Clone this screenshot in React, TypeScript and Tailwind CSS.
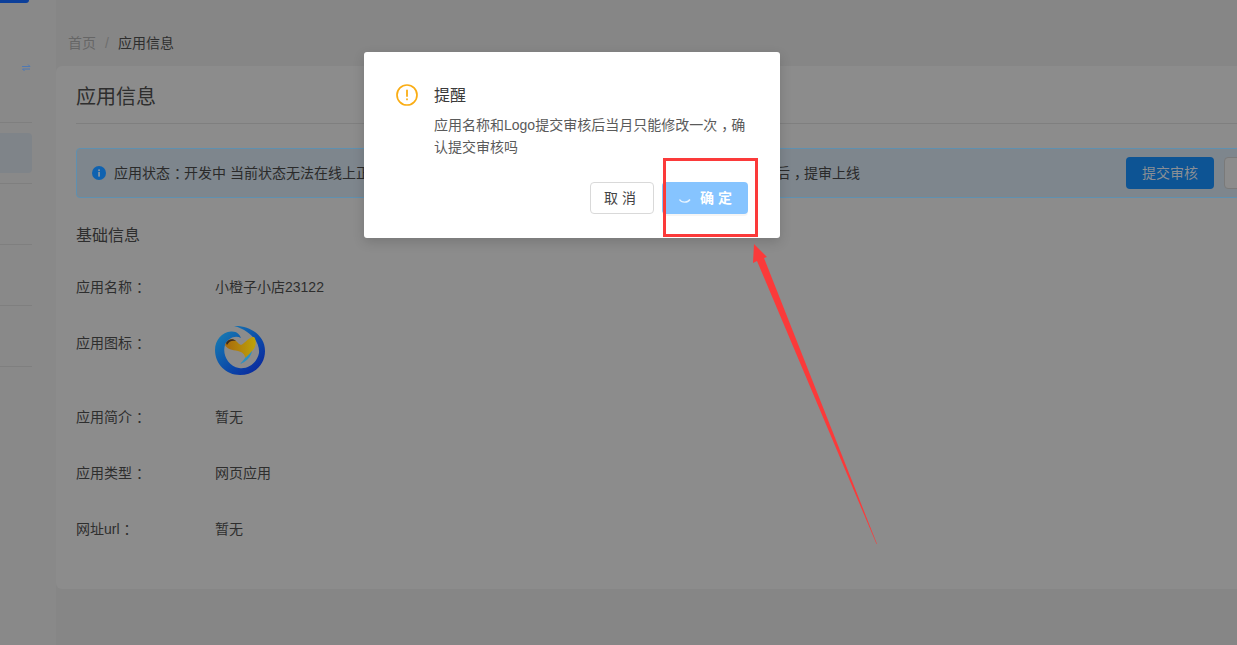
import React from "react";

function P({ c }: { c: string }) {
  return <span className="pl-[4px] tracking-[-4px]">{c}</span>;
}

function Row({ label, value, cls }: { label: React.ReactNode; value: React.ReactNode; cls: string }) {
  return (
    <div className={`flex ${cls}`}>
      <div className="w-[139px] h-7 leading-7 text-[14px] text-[#2e2e2e]">{label}</div>
      <div className="h-7 leading-7 text-[14px] text-[#2e2e2e]">{value}</div>
    </div>
  );
}

function Logo() {
  return (
    <svg width="50" height="50" viewBox="0 0 50 50" className="-mt-[4px]">
      <defs>
        <linearGradient id="ring" x1="0" y1="0" x2="1" y2="1">
          <stop offset="0" stopColor="#1a86b4" />
          <stop offset="0.6" stopColor="#0b47a8" />
          <stop offset="1" stopColor="#0a1f9a" />
        </linearGradient>
        <linearGradient id="heart" x1="0" y1="0" x2="1" y2="0">
          <stop offset="0" stopColor="#a8690c" />
          <stop offset="1" stopColor="#bda30a" />
        </linearGradient>
      </defs>
      <path d="M19 1 C34 0 50 10 50 26 C50 40 39 50 25 50 C11 50 0 39 0 25 C0 15 7 7 16 6.5 C22 6 25 10 26 13 C20 10 13 13 10 20 C7 29 13 41 24 43 C33 44.5 42 38 44 28 C45 16 34 5 19 1 Z" fill="url(#ring)" />
      <path d="M10 20 C12 14 18 13 21 16 C23 18 24 19 26 20 C30 18 35 11 39 12 C42 15 41 23 37 26 C35 29 32 32 30 33 C30 29 27 27 23 26 C17 25 12 24 10 20 Z" fill="url(#heart)" />
      <path d="M11 18 C13 14 18 13 21 16 C17 15 14 16 12 20 Z" fill="#3a2a20" />
      <path d="M37 26 C36 32 31 37 25 39 C29 35 30 33 30 33 C33 31 35 28 37 26 Z" fill="#2a8fc0" />
    </svg>
  );
}

export default function App() {
  return (
    <div className="relative w-[1237px] h-[645px] overflow-hidden bg-[#868686] font-['Liberation_Sans','Noto_Sans_CJK_SC',sans-serif]">
      <div className="flex h-[645px]">
        <aside className="w-[56px] shrink-0 h-[645px] bg-[#898989]">
          <div className="w-[29px] h-[3px] bg-[#0c3f9a] rounded-br-sm" />
          <div className="flex justify-end w-[32px] mt-[60px]">
            <svg width="10" height="10" viewBox="0 0 10 10" fill="none" stroke="#4f79b4" strokeWidth="1">
              <path d="M0 3.5H8L6 1.5" />
              <path d="M8 6H0.5L2.5 8" />
            </svg>
          </div>
          <div className="w-[32px] mt-[49px]">
            <div className="h-[61px] border-t border-[#7f7f7f] pt-[10px]">
              <div className="h-[40px] bg-[#7f8489] rounded-r-sm" />
            </div>
            <div className="h-[61px] border-t border-[#7f7f7f]" />
            <div className="h-[61px] border-t border-[#7f7f7f]" />
            <div className="h-[61px] border-t border-[#7f7f7f]" />
            <div className="h-[61px] border-t border-[#7f7f7f]" />
          </div>
        </aside>
        <main className="w-[1300px] shrink-0">
          <div className="flex items-center h-[22px] mt-[32px] ml-[12px] text-[14px]">
            <span className="text-[#666666]">首页</span>
            <span className="text-[#6e6e6e] mx-[9px]">/</span>
            <span className="text-[#2e2e2e]">应用信息</span>
          </div>
          <section className="mt-[12px] h-[523px] rounded-md bg-[#8c8c8c] pl-[20px]">
            <div className="h-[58px] border-b border-[#7f7f7f] pt-[15px]">
              <h1 className="text-[20px] leading-8 text-[#2e2e2e]">应用信息</h1>
            </div>
            <div className="mt-[24px] flex items-center h-[50px] w-[1400px] rounded-sm border border-[#5f90b0] bg-[#7e868d] pl-[15px]">
              <svg width="14" height="14" viewBox="0 0 14 14" className="shrink-0">
                <circle cx="7" cy="7" r="7" fill="#0f62b0" />
                <rect x="6.2" y="6" width="1.7" height="4.6" fill="#8c98a4" />
                <rect x="6.2" y="3.4" width="1.7" height="1.7" fill="#8c98a4" />
              </svg>
              <span className="ml-[8px] text-[14px] text-[#2a2a2a] w-[746px] whitespace-nowrap">
                应用状态<P c="：" />开发中 当前状态无法在线上正常使用应用<P c="，" />请先完善应用基础信息并提交审核<P c="，" />待审核全部通过后<P c="，" />提审上线
              </span>
              <button className="ml-[266px] w-[88px] h-[32px] rounded-sm bg-[#0d5494] text-[14px] text-[#8a8f95]">提交审核</button>
              <button className="ml-[10px] w-[88px] h-[32px] rounded-sm border border-[#7a7a7a] bg-[#8c8c8c]" />
            </div>
            <h2 className="mt-[26px] h-6 leading-6 text-[16px] text-[#2e2e2e]">基础信息</h2>
            <Row cls="mt-[25px]" label={<>应用名称<P c="：" /></>} value="小橙子小店23122" />
            <Row cls="mt-[28px] h-[50px]" label={<>应用图标<P c="：" /></>} value={<Logo />} />
            <Row cls="mt-[24px]" label={<>应用简介<P c="：" /></>} value="暂无" />
            <Row cls="mt-[28px]" label={<>应用类型<P c="：" /></>} value="网页应用" />
            <Row cls="mt-[28px]" label={<>网址url<P c="：" /></>} value="暂无" />
          </section>
        </main>
      </div>

      <div className="absolute left-[364px] top-[52px] w-[416px] h-[186px] rounded-[3px] bg-white shadow-[0_4px_12px_rgba(0,0,0,0.15)] pl-[32px] pt-[32px]">
        <div className="flex">
          <svg width="22" height="22" viewBox="0 0 22 22" className="shrink-0" fill="none">
            <circle cx="11" cy="11" r="10" stroke="#faad14" strokeWidth="1.7" />
            <rect x="10.1" y="5.5" width="1.8" height="7.5" rx="0.9" fill="#faad14" />
            <rect x="10.1" y="14.3" width="1.8" height="2" rx="0.9" fill="#faad14" />
          </svg>
          <div className="ml-[16px]">
            <div className="h-[23px] leading-[24px] text-[16px] text-[#3a3a3a]">提醒</div>
            <div className="mt-[7px] w-[316px] text-[14px] leading-[22px] text-[#5a5a5a] whitespace-nowrap">
              <p>应用名称和Logo提交审核后当月只能修改一次<P c="，" />确</p>
              <p>认提交审核吗</p>
            </div>
          </div>
        </div>
        <div className="flex mt-[24px] ml-[194px]">
          <button className="w-[64px] h-[32px] rounded-sm border border-[#d9d9d9] bg-white text-[14px] text-[#444444] tracking-[4px]">取消</button>
          <button className="ml-[8px] w-[86px] h-[32px] rounded-sm bg-[#86c4ff] text-[14px] font-bold text-white tracking-[4px] flex items-center pl-[16px] shadow-[0_2px_0_rgba(0,0,0,0.04)]">
            <svg width="14" height="14" viewBox="0 0 14 14" fill="none" stroke="#e8f4ff" strokeWidth="1.4" className="mr-[8px]">
              <path d="M1.5 8.5 C3.5 12 9.5 12 12 8.5" />
            </svg>
            确定
          </button>
        </div>
      </div>

      <div className="absolute left-[663px] top-[158px] w-[95px] h-[79px] border-[3px] border-[#fb3a3a]" />
      <svg className="absolute left-[740px] top-[235px]" width="150" height="320" viewBox="0 0 150 320">
        <polygon points="14,9 13,28 17,26 136.5,309 137,309 24,23 27,22" fill="#fb3a3a" />
      </svg>
    </div>
  );
}
